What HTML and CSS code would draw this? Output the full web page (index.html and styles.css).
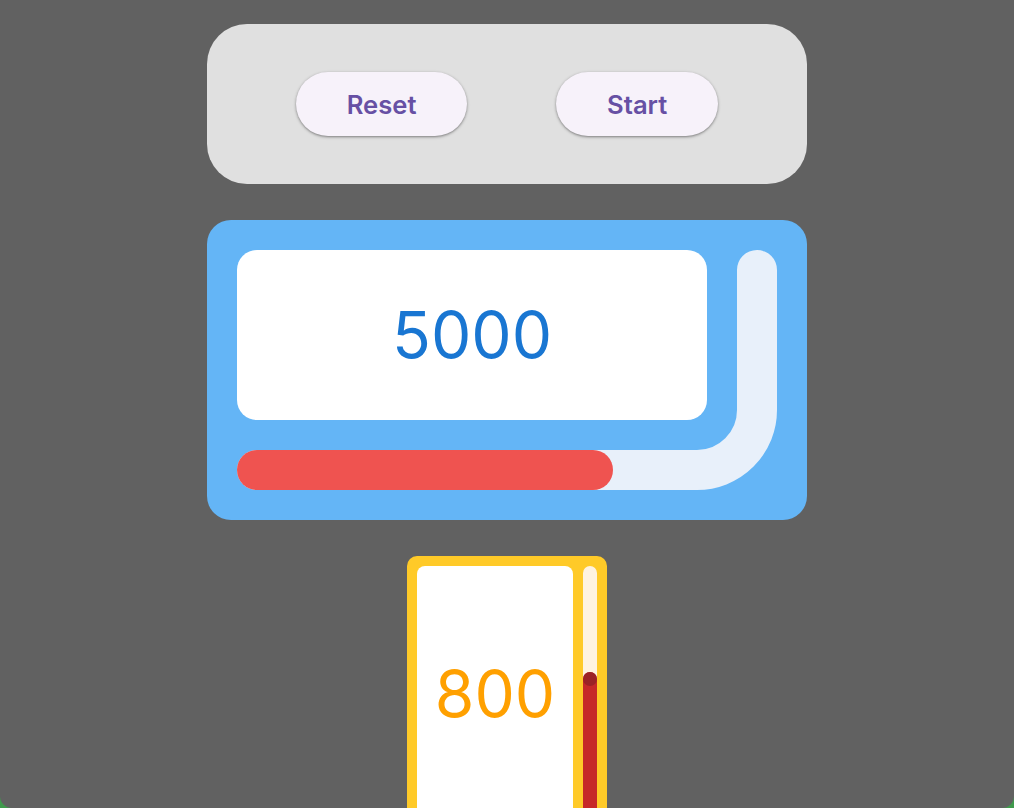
FILE: index.html
```html
<!DOCTYPE html>
<html lang="en">
<head>
<meta charset="utf-8">
<title>Counters</title>
<link rel="stylesheet" href="styles.css">
</head>
<body>
<div class="screen">
  <div class="controls">
    <button class="btn">Reset</button>
    <button class="btn">Start</button>
  </div>

  <div class="blue-card">
    <svg class="track" width="600" height="300" viewBox="0 0 600 300" aria-hidden="true">
      <path d="M550 50 V190 A60 60 0 0 1 490 250 H50" fill="none" stroke="#E8F0FA" stroke-width="40" stroke-linecap="round"/>
    </svg>
    <div class="blue-value">5000</div>
    <div class="blue-progress" style="width:376px"></div>
  </div>

  <div class="yellow-card">
    <div class="yellow-value">800</div>
    <div class="v-track">
      <div class="v-fill" style="height:150px"><span class="v-thumb"></span></div>
    </div>
  </div>
</div>
</body>
</html>
```
FILE: styles.css
```css
html, body {
  margin: 0;
  padding: 0;
  overflow: hidden;
  background: #3f9a4c;
}
.screen {
  width: 1014px;
  height: 808px;
  background: #616161;
  border-radius: 0 0 12px 12px;
  overflow: hidden;
  display: flex;
  flex-direction: column;
  align-items: center;
  gap: 36px;
  padding-top: 24px;
  box-sizing: border-box;
  font-family: Inter, Roboto, "Liberation Sans", sans-serif;
}
.controls {
  flex: none;
  width: 600px;
  height: 160px;
  background: #E0E0E0;
  border-radius: 40px;
  display: flex;
  align-items: center;
  justify-content: space-evenly;
}
.btn {
  height: 64px;
  padding: 0 51px;
  border: none;
  border-radius: 32px;
  background: #F7F2FA;
  color: #6750A4;
  font-family: Inter, Roboto, "Liberation Sans", sans-serif;
  font-size: 25.6px;
  font-weight: 600;
  box-shadow: 0 1px 2px rgba(0,0,0,0.3), 0 1px 3px 1px rgba(0,0,0,0.12);
}
.blue-card {
  flex: none;
  position: relative;
  width: 600px;
  height: 300px;
  box-sizing: border-box;
  padding: 30px;
  background: #64B5F6;
  border-radius: 24px;
  display: grid;
  grid-template-columns: 470px 40px;
  grid-template-rows: 170px 40px;
  column-gap: 30px;
  row-gap: 30px;
}
.track {
  position: absolute;
  left: 0;
  top: 0;
}
.blue-value {
  position: relative;
  background: #FFFFFF;
  border-radius: 20px;
  display: flex;
  align-items: center;
  justify-content: center;
  color: #1976D2;
  font-size: 64px;
  line-height: 1;
}
.blue-progress {
  position: relative;
  grid-column: 1 / 3;
  grid-row: 2;
  height: 40px;
  border-radius: 20px;
  background: #EF5350;
}
.yellow-card {
  flex: none;
  width: 200px;
  box-sizing: border-box;
  padding: 10px;
  background: #FFCA28;
  border-radius: 10px;
  display: flex;
  gap: 10px;
}
.yellow-value {
  width: 156px;
  height: 256px;
  background: #FFFFFF;
  border-radius: 8px;
  display: flex;
  align-items: center;
  justify-content: center;
  color: #FFA000;
  font-size: 64px;
  line-height: 1;
}
.v-track {
  width: 14px;
  height: 256px;
  background: #FFF3E0;
  border-radius: 7px;
  display: flex;
  flex-direction: column;
  justify-content: flex-end;
}
.v-fill {
  background: #C62828;
  border-radius: 7px 7px 0 0;
}
.v-thumb {
  display: block;
  width: 14px;
  height: 14px;
  border-radius: 50%;
  background: #9B2226;
}
```
